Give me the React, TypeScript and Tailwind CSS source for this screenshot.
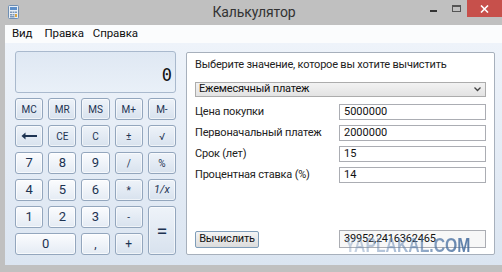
import React from "react";

const numBtn =
  "flex items-center justify-center rounded-[3px] border border-[#93a6bd] bg-gradient-to-b from-[#fbfcfe] to-[#e4ebf4] text-[#1d3352] shadow-[inset_0_0_0_1px_rgba(255,255,255,0.7)]";
const opBtn =
  "flex items-center justify-center rounded-[3px] border border-[#93a6bd] bg-gradient-to-b from-[#eef3f9] to-[#d8e2ee] text-[#1d3352] shadow-[inset_0_0_0_1px_rgba(255,255,255,0.6)]";

function Btn({ label, op, className = "", size = "text-[10px]" }: { label: React.ReactNode; op?: boolean; className?: string; size?: string }) {
  return <div className={`${op ? opBtn : numBtn} ${size} ${className}`}>{label}</div>;
}

function Row({ label, value }: { label: string; value: string }) {
  return (
    <div className="flex items-center justify-between h-[16px]">
      <span className="text-[11px] tracking-[-0.2px] text-[#222]">{label}</span>
      <div className="w-[147px] h-[16px] border border-[#abadb3] bg-white flex items-center pl-[4px] text-[11px] text-[#111]">{value}</div>
    </div>
  );
}

export default function App() {
  return (
    <div className="relative w-[502px] h-[272px] bg-[#c0c0c0] overflow-hidden flex flex-col font-['Roboto',sans-serif]">
      {/* title bar */}
      <div className="h-[25px] shrink-0 grid grid-cols-[1fr_auto_1fr]">
        <div className="flex items-start pl-[8px] pt-[5px]">
          <svg width="11" height="14" viewBox="0 0 11 14">
            <rect x="0.5" y="0.5" width="10" height="13" rx="1" fill="#e8eef5" stroke="#6f8fb3" />
            <rect x="2" y="2" width="7" height="3" fill="#5d8fc9" />
            <rect x="2" y="6.5" width="2" height="1.5" fill="#7a96b8" />
            <rect x="4.5" y="6.5" width="2" height="1.5" fill="#7a96b8" />
            <rect x="7" y="6.5" width="2" height="1.5" fill="#7a96b8" />
            <rect x="2" y="9" width="2" height="1.5" fill="#7a96b8" />
            <rect x="4.5" y="9" width="2" height="1.5" fill="#7a96b8" />
            <rect x="7" y="9" width="2" height="3" fill="#d9a441" />
            <rect x="2" y="11" width="4.5" height="1.5" fill="#7a96b8" />
          </svg>
        </div>
        <div className="flex items-center pl-[6px] text-[14px] tracking-[-0.1px] text-[#333]">Калькулятор</div>
        <div className="flex justify-end items-start">
          <div className="w-[24px] h-[17px] flex items-center justify-center">
            <div className="w-[7px] h-[2px] bg-[#333] mt-[4px]" />
          </div>
          <div className="w-[22px] h-[17px] flex items-center justify-center">
            <div className="w-[9px] h-[7px] border border-[#555] border-t-2" />
          </div>
          <div className="w-[35px] h-[17px] bg-[#c7504b] flex items-center justify-center">
            <svg width="9" height="8" viewBox="0 0 9 8">
              <path d="M1 0.5 L8 7.5 M8 0.5 L1 7.5" stroke="#fff" strokeWidth="1.6" />
            </svg>
          </div>
        </div>
      </div>

      {/* client */}
      <div className="flex-1 ml-[5px] mb-[7px] flex flex-col">
        <div className="h-[18px] shrink-0 bg-[#fbfcfd] flex items-center pl-[7px] text-[11.5px] tracking-[-0.1px] text-[#111]">
          <span className="mr-[12px]">Вид</span>
          <span className="mr-[9px]">Правка</span>
          <span>Справка</span>
        </div>
        <div className="flex-1 flex bg-gradient-to-b from-[#eef3fa] to-[#dbe5f1] pt-[8px]">
          {/* calculator */}
          <div className="ml-[10px] w-[161px] flex flex-col">
            <div className="h-[42px] rounded-[3px] border border-[#a9b9cd] bg-gradient-to-b from-[#dfe8f3] to-[#e9f0f8] flex items-center justify-end pr-[3px] pt-[8px] font-['DejaVu_Sans_Mono',monospace] text-[17px] text-[#111]">
              0
            </div>
            <div className="mt-[5px] grid grid-cols-5 gap-x-[5px] gap-y-[5px] auto-rows-[22px]">
              <Btn label="MC" op />
              <Btn label="MR" op />
              <Btn label="MS" op />
              <Btn label="M+" op />
              <Btn label="M-" op />
              <Btn
                op
                label={
                  <svg width="16" height="8" viewBox="0 0 16 8">
                    <path d="M4.5 0.5 L0.5 4 L4.5 7.5 Z" fill="#1d3352" />
                    <rect x="3" y="3" width="13" height="2" fill="#1d3352" />
                  </svg>
                }
              />
              <Btn label="CE" op />
              <Btn label="C" op />
              <Btn label="±" op />
              <Btn label="√" op />
              <Btn label="7" size="text-[13px]" />
              <Btn label="8" size="text-[13px]" />
              <Btn label="9" size="text-[13px]" />
              <Btn label="/" op />
              <Btn label="%" op />
              <Btn label="4" size="text-[13px]" />
              <Btn label="5" size="text-[13px]" />
              <Btn label="6" size="text-[13px]" />
              <Btn label="*" op />
              <Btn label={<span className="italic">1/x</span>} op size="text-[11px]" />
              <Btn label="1" size="text-[13px]" />
              <Btn label="2" size="text-[13px]" />
              <Btn label="3" size="text-[13px]" />
              <Btn label="-" op />
              <Btn label="=" op size="text-[20px]" className="row-span-2" />
              <Btn label="0" size="text-[13px]" className="col-span-2" />
              <Btn label="," size="text-[12px]" />
              <Btn label="+" op size="text-[12px]" />
            </div>
          </div>

          {/* panel */}
          <div className="ml-[10px] mt-[1px] w-[309px] h-[203px] border border-[#a7b0bc] rounded-[2px] bg-white flex flex-col pl-[8px] pr-[8px] pt-[5px] pb-[6px]">
            <div className="h-[14px] flex items-center text-[11px] tracking-[-0.2px] text-[#222]">Выберите значение, которое вы хотите вычистить</div>
            <div className="mt-[10px] h-[15px] border border-[#acacac] bg-gradient-to-b from-[#f2f2f2] to-[#e3e3e3] flex items-center justify-between pl-[3px] pr-[4px] text-[11px] tracking-[-0.2px] text-[#111]">
              <span>Ежемесячный платеж</span>
              <svg width="7" height="5" viewBox="0 0 7 5">
                <path d="M0.5 0.5 L3.5 3.5 L6.5 0.5" fill="none" stroke="#444" strokeWidth="1.3" />
              </svg>
            </div>
            <div className="mt-[7px] flex flex-col gap-[5px]">
              <Row label="Цена покупки" value="5000000" />
              <Row label="Первоначальный платеж" value="2000000" />
              <Row label="Срок (лет)" value="15" />
              <Row label="Процентная ставка (%)" value="14" />
            </div>
            <div className="flex-1" />
            <div className="flex items-end justify-between">
              <div className="w-[64px] h-[17px] rounded-[2px] border border-[#7f9db9] bg-gradient-to-b from-[#f4f4f4] to-[#dcdcdc] flex items-center justify-center text-[11px] tracking-[-0.2px] text-[#111]">
                Вычислить
              </div>
              <div className="w-[147px] h-[18px] border border-[#abadb3] bg-[#f7f7f7] flex items-center pl-[4px] text-[11px] tracking-[-0.2px] text-[#111]">
                39952,2416362465
              </div>
            </div>
          </div>
        </div>
      </div>

      {/* watermark */}
      <div className="absolute left-[345px] top-[234px] origin-left scale-x-[0.75] text-[21px] font-black font-['Liberation_Sans',sans-serif] leading-none bg-gradient-to-r from-[#7d98bd]/40 via-[#5a7fae]/55 to-[#3d6699]/85 bg-clip-text text-transparent">
        YAPLAKAL.COM
      </div>
    </div>
  );
}
